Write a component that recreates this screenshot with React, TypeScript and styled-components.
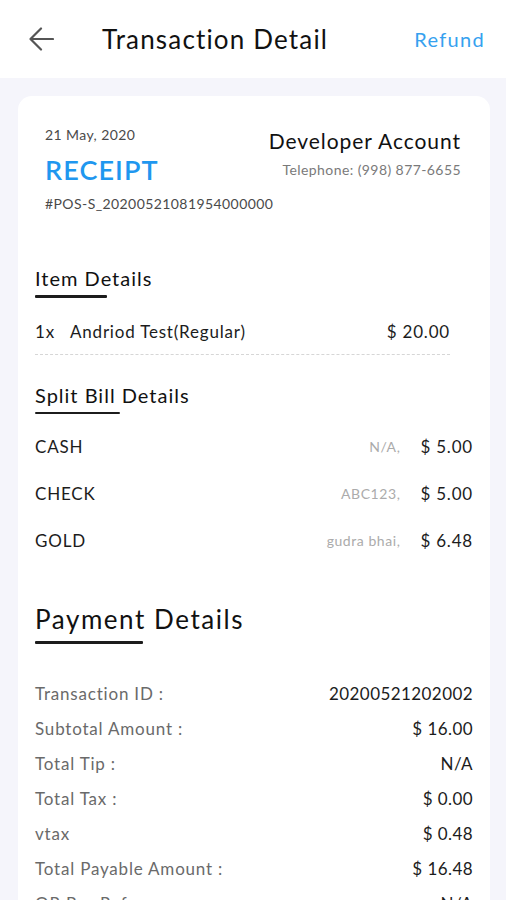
import React from "react";
import styled, { createGlobalStyle } from "styled-components";

const GlobalStyle = createGlobalStyle`
  html, body {
    margin: 0;
    padding: 0;
    background: #f5f5fb;
    font-family: Lato, "Open Sans", sans-serif;
    color: #1c1c1c;
  }
`;

const Page = styled.div`
  width: 506px;
  min-height: 900px;
  background: #f5f5fb;
  overflow: hidden;
  letter-spacing: 0.05em;
`;

const TopBar = styled.header`
  height: 78px;
  background: #ffffff;
  display: flex;
  align-items: center;
  padding: 0 21px 0 28px;
  box-sizing: border-box;
`;

const BackButton = styled.button`
  border: 0;
  background: none;
  padding: 0;
  width: 26px;
  height: 26px;
  display: flex;
  cursor: pointer;
`;

const Title = styled.h1`
  margin: 0 0 0 48px;
  font-size: 26px;
  font-weight: 400;
  letter-spacing: 0.045em;
  color: #111;
  flex: 1;
`;

const RefundLink = styled.span`
  font-size: 20px;
  letter-spacing: 0.065em;
  color: #36a1ef;
`;

const Card = styled.section`
  margin: 18px 16px 0 18px;
  background: #ffffff;
  border-radius: 14px;
  padding: 30px 0 40px;
`;

const ReceiptHead = styled.div`
  display: flex;
  justify-content: space-between;
  padding: 0 29px 0 27px;
`;

const Column = styled.div<{ $align?: "left" | "right" }>`
  display: flex;
  flex-direction: column;
  white-space: nowrap;
  align-items: ${(p) => (p.$align === "right" ? "flex-end" : "flex-start")};
  ${(p) => (p.$align === "right" ? "flex-shrink: 0;" : "min-width: 0;")}
`;

const SmallText = styled.span<{ $tone?: "dark" | "mid" }>`
  font-size: 14px;
  line-height: 18px;
  letter-spacing: 0.03em;
  color: ${(p) => (p.$tone === "mid" ? "#7a7a7a" : "#4a4a4a")};
`;

const ReceiptTitle = styled.span`
  font-size: 27px;
  line-height: 34px;
  font-weight: 600;
  letter-spacing: 0.04em;
  color: #1f97ef;
  margin: 9px 0 8px;
`;

const AccountName = styled.span`
  font-size: 21px;
  line-height: 28px;
  letter-spacing: 0.045em;
  color: #111;
  margin: 1px 0 6px;
`;

const Section = styled.div<{ $top: number; $right?: number }>`
  margin-top: ${(p) => p.$top}px;
  padding: 0 ${(p) => p.$right ?? 17}px 0 17px;
`;

const SectionTitle = styled.h2<{ $big?: boolean; $bar: number }>`
  margin: 0;
  font-weight: 400;
  font-size: ${(p) => (p.$big ? 26 : 20)}px;
  line-height: ${(p) => (p.$big ? 34 : 26)}px;
  letter-spacing: ${(p) => (p.$big ? 0.06 : 0.05)}em;
  color: #111;
  &::after {
    content: "";
    display: block;
    width: ${(p) => p.$bar}px;
    height: 2.5px;
    margin-top: ${(p) => (p.$big ? 5 : 4)}px;
    background: #1c1c1c;
    border-radius: 1px;
  }
`;

const ItemRow = styled.div`
  display: flex;
  align-items: center;
  font-size: 17px;
  line-height: 24px;
  margin-top: 22px;
  padding-bottom: 10px;
  border-bottom: 1px dashed #d6d6d6;
  color: #1c1c1c;
`;

const Qty = styled.span`
  width: 35px;
`;

const Grow = styled.span`
  flex: 1;
`;

const SplitList = styled.div`
  display: flex;
  flex-direction: column;
  gap: 23px;
  margin-top: 21px;
`;

const SplitRow = styled.div`
  display: flex;
  align-items: center;
  font-size: 17px;
  line-height: 24px;
`;

const Note = styled.span`
  font-size: 14px;
  letter-spacing: 0.04em;
  color: #ababab;
  margin-right: 20px;
`;

const InfoList = styled.div`
  display: flex;
  flex-direction: column;
  gap: 11px;
  margin-top: 38px;
`;

const InfoRow = styled.div`
  display: flex;
  justify-content: space-between;
  font-size: 17px;
  line-height: 24px;
`;

const InfoLabel = styled.span`
  color: #6a6a6a;
`;

const InfoValue = styled.span`
  color: #1c1c1c;
  letter-spacing: 0.025em;
`;

const splits = [
  { name: "CASH", note: "N/A,", amount: "$ 5.00" },
  { name: "CHECK", note: "ABC123,", amount: "$ 5.00" },
  { name: "GOLD", note: "gudra bhai,", amount: "$ 6.48" },
];

const payment = [
  ["Transaction ID :", "20200521202002"],
  ["Subtotal Amount :", "$ 16.00"],
  ["Total Tip :", "N/A"],
  ["Total Tax :", "$ 0.00"],
  ["vtax", "$ 0.48"],
  ["Total Payable Amount :", "$ 16.48"],
  ["QR Pay Ref :", "N/A"],
];

const App: React.FC = () => {
  return (
    <Page>
      <GlobalStyle />
      <TopBar>
        <BackButton aria-label="Back">
          <svg width="26" height="26" viewBox="0 0 26 26" fill="none">
            <path
              d="M25 13H2.5M13 2.5L2.5 13L13 23.5"
              stroke="#555"
              strokeWidth="2.2"
              strokeLinecap="round"
              strokeLinejoin="round"
            />
          </svg>
        </BackButton>
        <Title>Transaction Detail</Title>
        <RefundLink>Refund</RefundLink>
      </TopBar>

      <Card>
        <ReceiptHead>
          <Column>
            <SmallText>21 May, 2020</SmallText>
            <ReceiptTitle>RECEIPT</ReceiptTitle>
            <SmallText>#POS-S_20200521081954000000</SmallText>
          </Column>
          <Column $align="right">
            <AccountName>Developer Account</AccountName>
            <SmallText $tone="mid">Telephone: (998) 877-6655</SmallText>
          </Column>
        </ReceiptHead>

        <Section $top={52} $right={40}>
          <SectionTitle $bar={72}>Item Details</SectionTitle>
          <ItemRow>
            <Qty>1x</Qty>
            <Grow>Andriod Test(Regular)</Grow>
            <span>$ 20.00</span>
          </ItemRow>
        </Section>

        <Section $top={27}>
          <SectionTitle $bar={85}>Split Bill Details</SectionTitle>
          <SplitList>
            {splits.map((s) => (
              <SplitRow key={s.name}>
                <Grow>{s.name}</Grow>
                <Note>{s.note}</Note>
                <span>{s.amount}</span>
              </SplitRow>
            ))}
          </SplitList>
        </Section>

        <Section $top={49}>
          <SectionTitle $big $bar={108}>
            Payment Details
          </SectionTitle>
          <InfoList>
            {payment.map(([label, value]) => (
              <InfoRow key={label}>
                <InfoLabel>{label}</InfoLabel>
                <InfoValue>{value}</InfoValue>
              </InfoRow>
            ))}
          </InfoList>
        </Section>
      </Card>
    </Page>
  );
};

export default App;
